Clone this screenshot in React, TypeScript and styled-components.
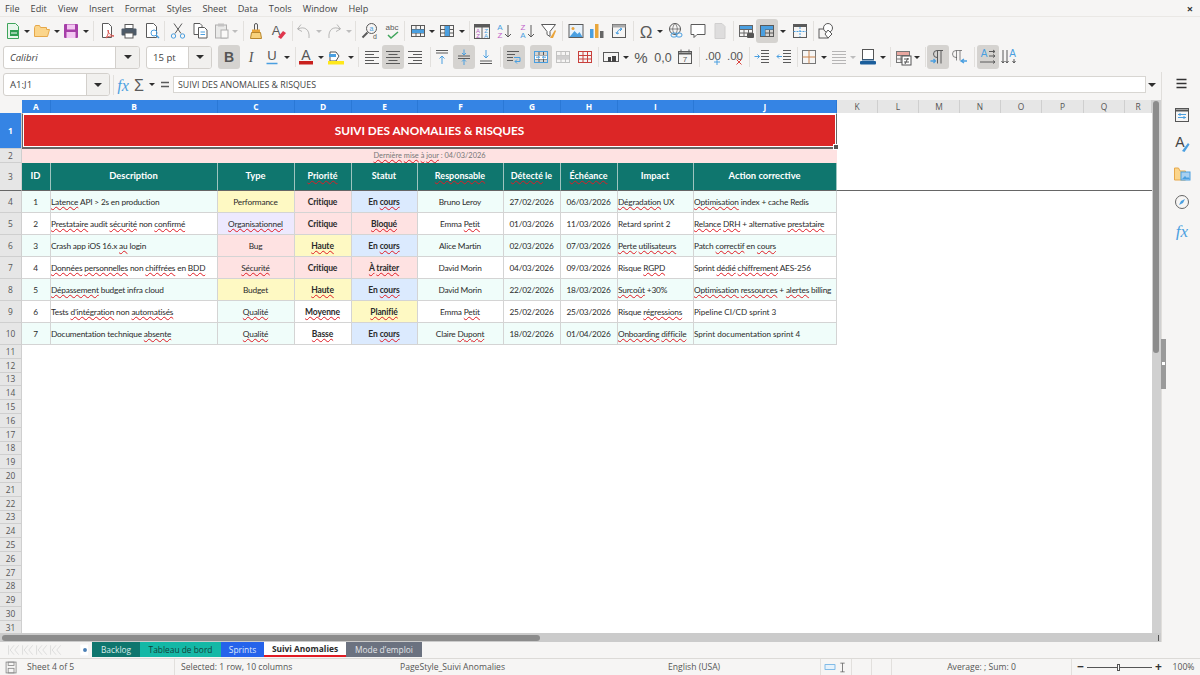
import React from 'react';
import styled, { createGlobalStyle } from 'styled-components';

const GlobalStyle = createGlobalStyle`
  html, body { margin: 0; padding: 0; height: 100%; overflow: hidden; background: #f6f5f4; }
  * { box-sizing: border-box; }
`;

const UI_FONT = `"Open Sans", "Noto Sans", sans-serif`;
const CELL_FONT = `Lato, "Liberation Sans", sans-serif`;
const BLUE = '#4a9fe0';
const DARK = '#5a5a5a';

const Page = styled.div`
  width: 1200px;
  height: 675px;
  display: flex;
  flex-direction: column;
  background: #f6f5f4;
  font-family: ${UI_FONT};
  color: #3d3d3d;
  overflow: hidden;
`;

const MenuBar = styled.div`
  height: 17px;
  flex: none;
  display: flex;
  align-items: center;
  padding-left: 5px;
  gap: 11px;
  font-size: 9.2px;
  color: #444;
  position: relative;
  border-bottom: 1px solid #eae8e5;
`;

const CloseX = styled.span`
  position: absolute;
  right: 7px;
  top: 1px;
  font-size: 11px;
  font-weight: 700;
  color: #333;
`;

const ToolRow = styled.div<{ $h: number; $pad?: number }>`
  height: ${(p) => p.$h}px;
  padding-bottom: ${(p) => p.$pad ?? 0}px;
  display: flex;
  align-items: center;
  flex: none;
`;

const Slot = styled.div<{ $w: number; $gap: number; $active?: boolean }>`
  flex: none;
  width: ${(p) => p.$w}px;
  height: 24px;
  margin-left: ${(p) => p.$gap}px;
  display: flex;
  align-items: center;
  justify-content: center;
  border-radius: 3px;
  background: ${(p) => (p.$active ? '#d5d3d0' : 'transparent')};
`;

const Sep = styled.div<{ $gap: number }>`
  flex: none;
  width: 1px;
  height: 20px;
  margin-left: ${(p) => p.$gap}px;
  background: #e2e0dd;
`;

const Caret = styled.span<{ $light?: boolean; $big?: boolean }>`
  width: 0;
  height: 0;
  border-left: ${(p) => (p.$big ? 4 : 3)}px solid transparent;
  border-right: ${(p) => (p.$big ? 4 : 3)}px solid transparent;
  border-top: ${(p) => (p.$big ? 4 : 3)}px solid ${(p) => (p.$light ? '#bdbdbd' : '#2e2e2e')};
`;

const Combo = styled.div<{ $w: number; $gap: number; $btn: number }>`
  flex: none;
  width: ${(p) => p.$w}px;
  height: 23px;
  margin-left: ${(p) => p.$gap}px;
  display: grid;
  grid-template-columns: 1fr ${(p) => p.$btn}px;
  border: 1px solid #d3d0cc;
  border-radius: 3px;
  background: #fff;
  overflow: hidden;
`;

const ComboText = styled.div<{ $italic?: boolean }>`
  display: flex;
  align-items: center;
  padding-left: 6px;
  font-size: 9.6px;
  font-style: ${(p) => (p.$italic ? 'italic' : 'normal')};
  color: #444;
`;

const ComboBtn = styled.div`
  display: flex;
  align-items: center;
  justify-content: center;
  background: #f1f0ee;
  border-left: 1px solid #d3d0cc;
`;

const FormulaRow = styled.div`
  height: 28px;
  padding-bottom: 3px;
  display: flex;
  align-items: center;
  flex: none;
`;

const FormulaInput = styled.div`
  flex: none;
  width: 973px;
  height: 17px;
  margin-left: -3px;
  border: 1px solid #d8d6d2;
  background: #fff;
  padding-left: 4px;
  display: flex;
  align-items: center;
  font-size: 8.8px;
  color: #444;
`;

const Main = styled.div`
  flex: 1;
  min-height: 0;
  display: flex;
`;

const SheetArea = styled.div`
  width: 1161px;
  flex: none;
  display: flex;
  flex-direction: column;
`;

const SheetBody = styled.div`
  flex: 1;
  min-height: 0;
  display: flex;
`;

const Sheet = styled.div`
  width: 1152px;
  flex: none;
  overflow: hidden;
  background: #fff;
`;

const Grid = styled.div`
  display: grid;
  grid-template-columns: 22px 29px 167px 77px 57px 66px 86px 57px 57px 76px 143px 41px 41px 41px 41px 41px 42px 41px 27px;
  font-family: ${CELL_FONT};
`;

const Corner = styled.div`
  background: #f6f5f4;
  height: 13px;
`;

const ColHead = styled.div<{ $sel?: boolean }>`
  height: 13px;
  display: flex;
  align-items: center;
  justify-content: center;
  font-family: ${UI_FONT};
  font-size: 8.4px;
  font-weight: ${(p) => (p.$sel ? 700 : 400)};
  color: ${(p) => (p.$sel ? '#fff' : '#555')};
  background: ${(p) => (p.$sel ? '#3584e4' : '#e6e6e6')};
  border-right: 1px solid ${(p) => (p.$sel ? '#2a78d6' : '#cfcfcf')};
`;

const RowHead = styled.div<{ $h: number; $sel?: boolean; $bar?: boolean }>`
  height: ${(p) => p.$h}px;
  display: flex;
  align-items: center;
  justify-content: center;
  font-family: ${UI_FONT};
  font-size: 8.4px;
  font-weight: ${(p) => (p.$sel ? 700 : 400)};
  color: ${(p) => (p.$sel ? '#fff' : '#555')};
  background: ${(p) => (p.$sel ? '#3584e4' : '#e6e6e6')};
  border-bottom: 1px solid ${(p) => (p.$bar ? '#666' : '#cfcfcf')};
  border-right: 1px solid #cfcfcf;
`;

const TitleCell = styled.div`
  grid-column: 2 / span 10;
  height: 36px;
  display: flex;
  align-items: center;
  justify-content: center;
  background: #dc2626;
  color: #fff;
  font-size: 11.8px;
  letter-spacing: -0.03px;
  font-weight: 700;
  position: relative;
  box-shadow: inset 0 0 0 1px #fff;
  border-top: 1px solid #fff;
  border-bottom: 2px solid #666;
  border-right: 1px solid #666;
  border-left: 1px solid #666;
`;

const Handle = styled.span`
  position: absolute;
  right: -3px;
  bottom: -3px;
  width: 4px;
  height: 4px;
  background: #555;
  border: 1px solid #fff;
  box-sizing: content-box;
`;

const DateCell = styled.div`
  grid-column: 2 / span 10;
  height: 14px;
  padding-bottom: 1px;
  display: flex;
  align-items: center;
  justify-content: center;
  background: #fee2e2;
  color: #777;
  font-size: 7.4px;
`;

const Blank = styled.div<{ $h: number; $span: number; $bar?: boolean }>`
  grid-column: span ${(p) => p.$span};
  height: ${(p) => p.$h}px;
  background: #fff;
  border-bottom: ${(p) => (p.$bar ? '1px solid #666' : 'none')};
`;

const HeadCell = styled.div<{ $small?: boolean }>`
  height: 28px;
  padding: 0 1px 2px 0;
  display: flex;
  align-items: center;
  justify-content: center;
  background: #0f766e;
  color: #fff;
  font-size: ${(p) => (p.$small ? '9px' : '9.4px')};
  font-weight: 700;
  white-space: nowrap;
  border-right: 1px solid #9dc4bf;
  border-bottom: 1px solid #666;
`;

const Cell = styled.div<{ $bg: string; $left?: boolean; $bold?: boolean; $small?: boolean }>`
  height: 22px;
  display: flex;
  align-items: center;
  justify-content: ${(p) => (p.$left ? 'flex-start' : 'center')};
  padding-right: ${(p) => (p.$left ? '0' : '1px')};
  background: ${(p) => p.$bg};
  color: #2b2b2b;
  font-size: ${(p) => (p.$bold ? '8.5px' : p.$small ? '8.1px' : '8.3px')};
  letter-spacing: ${(p) => (p.$bold ? '-0.12px' : p.$small ? '0' : '-0.18px')};
  font-weight: ${(p) => (p.$bold ? 700 : 400)};
  white-space: nowrap;
  overflow: hidden;
  border-right: 1px solid #d4d4d4;
  border-bottom: 1px solid #d4d4d4;
`;

const Spell = styled.span`
  text-decoration: underline wavy #e01b24;
  text-decoration-thickness: 0.6px;
  text-underline-offset: 0.5px;
  text-decoration-skip-ink: none;
`;

const VScroll = styled.div`
  width: 9px;
  flex: none;
  background: #d0d0d0;
  padding: 1px 0 0 1px;
`;

const VThumb = styled.div`
  width: 6px;
  height: 252px;
  border-radius: 3px;
  background: #8c8c8c;
`;

const HScroll = styled.div`
  height: 9px;
  flex: none;
  background: #cbcbcb;
  padding: 2px 0 0 2px;
  position: relative;
`;

const HThumb = styled.div`
  width: 538px;
  height: 6px;
  border-radius: 3px;
  background: #8c8c8c;
`;

const HGrip = styled.span`
  position: absolute;
  right: 2px;
  top: 2px;
  width: 1px;
  height: 6px;
  background: #555;
`;

const Sidebar = styled.div`
  flex: 1;
  border-left: 1px solid #e0dedb;
  display: flex;
  flex-direction: column;
  align-items: center;
  padding-top: 3px;
  position: relative;
`;

const SideBtn = styled.div<{ $gap: number }>`
  margin-top: ${(p) => p.$gap}px;
  height: 18px;
  display: flex;
  align-items: center;
  justify-content: center;
  padding-left: 2px;
`;

const SideGrip = styled.span`
  position: absolute;
  left: -1px;
  top: 267px;
  width: 5px;
  height: 50px;
  background: #9a9a9a;
  &::after {
    content: '';
    position: absolute;
    left: 1px;
    top: 23px;
    width: 3px;
    height: 3px;
    background: #fff;
  }
`;

const TabBar = styled.div`
  height: 16px;
  flex: none;
  display: flex;
  align-items: stretch;
  padding-bottom: 1px;
`;

const TabNav = styled.div`
  width: 77px;
  display: flex;
  align-items: center;
  padding-left: 7px;
`;

const AddTab = styled.div`
  width: 15px;
  display: flex;
  align-items: center;
  justify-content: center;
`;

const Tab = styled.div<{ $bg: string; $fg: string; $w: number; $active?: boolean }>`
  width: ${(p) => p.$w}px;
  display: flex;
  align-items: center;
  justify-content: center;
  background: ${(p) => p.$bg};
  color: ${(p) => p.$fg};
  font-size: 8.4px;
  font-weight: ${(p) => (p.$active ? 700 : 400)};
  border-bottom: ${(p) => (p.$active ? '2px solid #e01b24' : 'none')};
`;

const StatusBar = styled.div`
  height: 17px;
  flex: none;
  display: flex;
  align-items: center;
  border-top: 1px solid #dcdad7;
  font-size: 8.6px;
  color: #555;
`;

const Field = styled.div<{ $w: number; $center?: boolean; $pad?: number; $line?: boolean }>`
  flex: none;
  width: ${(p) => p.$w}px;
  height: 100%;
  display: flex;
  align-items: center;
  justify-content: ${(p) => (p.$center ? 'center' : 'flex-start')};
  padding-left: ${(p) => p.$pad ?? 0}px;
  border-right: ${(p) => (p.$line ? '1px solid #e2e0dd' : 'none')};
`;

const ZoomTrack = styled.div`
  width: 65px;
  height: 1px;
  margin: 0 3px;
  background: #555;
  position: relative;
`;

const ZoomThumb = styled.span`
  position: absolute;
  left: 30px;
  top: -3px;
  width: 3px;
  height: 7px;
  background: #fff;
  border: 1px solid #555;
`;

const ZoomSign = styled.span`
  font-size: 12px;
  font-weight: 700;
  color: #333;
  line-height: 1;
`;

const Svg = ({ children, size = 18 }: { children: React.ReactNode; size?: number }) => (
  <svg width={size} height={size} viewBox="0 0 18 18" fill="none" strokeWidth={1}>
    {children}
  </svg>
);

const Lines = ({ rows, color = DARK }: { rows: [number, number, number][]; color?: string }) => (
  <>
    {rows.map(([x1, x2, y], i) => (
      <line key={i} x1={x1} x2={x2} y1={y} y2={y} stroke={color} />
    ))}
  </>
);

const TableGrid = ({ stroke = DARK }: { stroke?: string }) => (
  <>
    <rect x="2.5" y="3.5" width="13" height="11" stroke={stroke} />
    <path d="M2.5 7.5h13M2.5 11h13M7 3.5v11M11.5 3.5v11" stroke={stroke} />
  </>
);

const Label = ({ x, y, c, s = 8, t, w }: { x: number; y: number; c: string; s?: number; t: string; w?: number }) => (
  <text x={x} y={y} fill={c} fontSize={s} fontWeight={w} fontFamily="Liberation Sans, sans-serif" textAnchor="middle">
    {t}
  </text>
);

const ICONS: Record<string, React.ReactNode> = {
  new: <><path d="M3.5 1.5h8l3 3v12h-11z" stroke="#3fa55b" fill="#e9f6ec" /><rect x="6" y="8" width="8" height="6" fill="#2f9e52" /><path d="M7 11h6" stroke="#fff" /></>,
  open: <><path d="M1.5 5.5v9h13l2-7h-3v-2h-6l-1-2h-4z" stroke="#e6a84a" fill="#fbd58b" /></>,
  save: <><rect x="2" y="2" width="14" height="14" rx="1" fill="#a63fa8" /><rect x="5" y="2.5" width="8" height="5" fill="#f3c7f2" /><rect x="4.5" y="10" width="9" height="6" fill="#f3c7f2" /></>,
  pdf: <><path d="M4.5 1.5h6l3 3v11h-9z" stroke={DARK} fill="#fff" /><path d="M8 16c2-3 3-6 2-8 0 3 2 5 6 6-3 0-6 0-8 2z" stroke="#d9534f" /></>,
  print: <><rect x="5" y="2.5" width="8" height="4" stroke={DARK} fill="#fff" /><rect x="1.5" y="6.5" width="15" height="7" rx="1" fill="#4d5a68" /><rect x="5" y="11" width="8" height="5" fill="#fff" stroke={DARK} /></>,
  preview: <><path d="M3.5 1.5h7l3 3v11h-10z" stroke={DARK} fill="#fff" /><circle cx="11" cy="11" r="3" stroke={BLUE} /><path d="M13 13l3 3" stroke={BLUE} strokeWidth="1.5" /></>,
  cut: <><path d="M5 1.5l7 10M13 1.5l-7 10" stroke={DARK} /><circle cx="4.5" cy="14" r="2.2" stroke={BLUE} /><circle cx="13.5" cy="14" r="2.2" stroke={BLUE} /></>,
  copy: <><path d="M3 1.5h6l2 2v9H3z" stroke={DARK} fill="#fff" /><path d="M7.5 5.5h6l2.5 2.5v8h-8.5z" stroke={DARK} fill="#fff" /><path d="M9.5 10h4.5M9.5 12.5h4.5" stroke={BLUE} /></>,
  paste: <g opacity="0.45"><rect x="2.5" y="3" width="11" height="13" stroke={DARK} fill="#ddd" /><rect x="5" y="1.5" width="6" height="3" fill="#888" /><rect x="8" y="8" width="7" height="8" stroke={DARK} fill="#fff" /></g>,
  clone: <><path d="M7.5 8V3a1.5 1.5 0 0 1 3 0v5" stroke={DARK} /><rect x="5" y="7.5" width="8" height="3" fill="#e9a63a" /><path d="M4.5 10.5h9l1 6h-11z" stroke="#b8862c" fill="#f8d27c" /></>,
  clear: <><Label x={7} y={13} c={DARK} s={13} t="A" /><path d="M9 15l5-6 3 2-5 6z" fill="#e0364c" /></>,
  undo: <g opacity="0.4"><path d="M6 2.5L2.5 7 7 9.5M3 7c6-3 12 0 11 9" stroke={DARK} /></g>,
  redo: <g opacity="0.4"><path d="M12 2.5L15.5 7 11 9.5M15 7C9 4 3 7 4 16" stroke={DARK} /></g>,
  find: <><circle cx="10.5" cy="6.5" r="5" stroke={DARK} /><path d="M6.5 10.5l-5 5" stroke={DARK} strokeWidth="2" /><Label x={10.5} y={9} c={BLUE} s={7} t="a" /><Label x={14} y={17} c={DARK} s={7} t="d" /></>,
  spell: <><Label x={9} y={8} c={DARK} s={8} t="abc" /><path d="M5 13l3 3 7-6" stroke="#3fa55b" strokeWidth="1.5" /></>,
  rows: <><TableGrid /><rect x="3" y="7.5" width="12" height="3.5" fill={BLUE} /></>,
  cols: <><TableGrid /><rect x="7" y="4" width="4.5" height="10" fill={BLUE} /></>,
  sort: <><rect x="1.5" y="2.5" width="15" height="14" stroke={DARK} /><rect x="1.5" y="2.5" width="15" height="3" fill={DARK} /><path d="M9 5v11" stroke={DARK} /><Label x={5} y={11} c="#b560c4" s={6} t="A" /><Label x={5} y={16} c="#b560c4" s={6} t="Z" /><Label x={13} y={11} c={BLUE} s={6} t="Z" /><Label x={13} y={16} c={BLUE} s={6} t="A" /></>,
  asc: <><Label x={5} y={8} c={BLUE} s={8} t="A" /><Label x={5} y={16} c="#c05fc9" s={8} t="Z" /><path d="M13 3v12M10 12l3 3 3-3" stroke={DARK} /></>,
  desc: <><Label x={5} y={8} c="#c05fc9" s={8} t="Z" /><Label x={5} y={16} c={BLUE} s={8} t="A" /><path d="M13 3v12M10 12l3 3 3-3" stroke={DARK} /></>,
  filter: <><path d="M1.5 2.5h14l-5.5 7v5l-3-2v-3z" stroke={DARK} fill="#fff" /><path d="M10 16l5-8 1 1-3 7z" fill="#eaa43a" /></>,
  image: <><rect x="2" y="2.5" width="14" height="13" stroke={DARK} fill="#e8f2fb" /><circle cx="6" cy="6.5" r="1.5" fill="#e8a33d" /><path d="M2.5 15l5-6 3 3 2-2 3 5z" fill={BLUE} /></>,
  chart: <><rect x="2" y="7" width="3.5" height="9" fill={BLUE} /><rect x="7" y="2" width="3.5" height="14" fill="#e9a63a" /><rect x="12" y="9" width="3.5" height="7" fill="#666" /></>,
  pivot: <><rect x="2.5" y="2.5" width="13" height="13" stroke={DARK} /><rect x="2.5" y="2.5" width="13" height="3" fill="#aaa" /><path d="M7 12c0-3 2-5 5-5M10 6l2 1-2 2M6 10l1 2 2-1" stroke={BLUE} /></>,
  omega: <text x="9" y="15.5" fontSize="17" textAnchor="middle" fill={DARK} fontFamily="Liberation Sans, sans-serif">Ω</text>,
  link: <><circle cx="8" cy="7" r="5.5" stroke={DARK} /><path d="M2.5 7h11M8 1.5c-3 3-3 8 0 11M8 1.5c3 3 3 8 0 11" stroke={DARK} strokeWidth="0.7" /><rect x="4" y="11" width="6" height="4" rx="2" stroke={BLUE} /><rect x="9" y="11" width="6" height="4" rx="2" stroke={BLUE} /></>,
  comment: <><path d="M2 2.5h14v10H8l-3 3v-3H2z" stroke={DARK} fill="#fff" /></>,
  headfoot: <g opacity="0.4"><path d="M4 1.5h7l3 3v12H4z" fill="#bbb" stroke="#999" /></g>,
  printarea: <><TableGrid stroke="#666" /><rect x="3" y="4" width="12" height="3" fill={BLUE} /><rect x="10" y="11" width="7" height="5" rx="1" fill="#555" /></>,
  freeze: <><TableGrid /><rect x="3" y="4" width="12" height="3.5" fill={BLUE} /><rect x="3" y="4" width="4" height="10" fill={BLUE} /></>,
  split: <><rect x="2.5" y="2.5" width="13" height="13" stroke={DARK} /><rect x="2.5" y="2.5" width="13" height="2.5" fill={DARK} /><path d="M2.5 9.5h13M9 5v10" stroke={BLUE} strokeDasharray="2 1" /></>,
  shapes: <><rect x="2" y="7" width="9" height="9" stroke={DARK} /><circle cx="11" cy="6" r="4.5" stroke={DARK} fill="#fff" /><path d="M11 8l4 4-4 4-3-4z" stroke={DARK} fill="#fff" /></>,
  bold: <text x="9" y="14" fontSize="14" fontWeight="700" textAnchor="middle" fill="#555" fontFamily="Liberation Sans, sans-serif">B</text>,
  italic: <text x="9" y="14" fontSize="14" fontStyle="italic" textAnchor="middle" fill="#555" fontFamily="Liberation Serif, serif">I</text>,
  underline: <><Label x={9} y={12} c="#555" s={13} t="U" /><path d="M3.5 15.5h11" stroke={BLUE} strokeWidth="1.5" /></>,
  fontcolor: <><Label x={9} y={12} c="#555" s={14} t="A" /><rect x="2" y="13" width="14" height="3.5" fill="#c9211e" /></>,
  bgcolor: <><path d="M3 4h6l3 4-3 5H3z" fill="#fff" stroke="#555" /><path d="M2 6h7v3H2z" fill={BLUE} /><rect x="1" y="13" width="16" height="3.5" fill="#ffe81a" /></>,
  left: <Lines rows={[[2, 16, 3.5], [2, 11, 6.5], [2, 16, 9.5], [2, 11, 12.5], [2, 16, 15.5]]} />,
  center: <Lines rows={[[2, 16, 3.5], [4.5, 13.5, 6.5], [2, 16, 9.5], [4.5, 13.5, 12.5], [2, 16, 15.5]]} />,
  right: <Lines rows={[[2, 16, 3.5], [7, 16, 6.5], [2, 16, 9.5], [7, 16, 12.5], [2, 16, 15.5]]} />,
  top: <><Lines rows={[[3, 15, 2.5], [3, 15, 5]]} /><path d="M9 16V8M6.5 10.5L9 8l2.5 2.5" stroke={BLUE} /></>,
  middle: <><Lines rows={[[3, 15, 8], [3, 15, 10.5]]} /><path d="M9 1.5V7M7 5l2 2 2-2M9 17v-5.5M7 13.5l2-2 2 2" stroke={BLUE} /></>,
  bottom: <><Lines rows={[[3, 15, 13], [3, 15, 15.5]]} /><path d="M9 2v8M6.5 7.5L9 10l2.5-2.5" stroke={BLUE} /></>,
  wrap: <><Lines rows={[[2, 14, 3.5], [2, 10, 6.5], [2, 8, 9.5], [2, 8, 12.5]]} /><path d="M9 9.5h6v4H10M12 11.5l-2 2 2 2" stroke={BLUE} /></>,
  merge: <><TableGrid /><rect x="3" y="7.5" width="12" height="3.5" fill="#fff" /><path d="M4 9.2h3.5M14 9.2h-3.5M6 7.8l1.5 1.4L6 10.6M12 7.8l-1.5 1.4 1.5 1.4" stroke={BLUE} /><rect x="2.5" y="3.5" width="13" height="11" stroke={BLUE} /></>,
  unmerge: <g opacity="0.4"><TableGrid stroke="#777" /><rect x="3" y="7.5" width="12" height="3.5" fill="#999" /></g>,
  splitcell: <TableGrid stroke="#c9403c" />,
  format: <><rect x="1.5" y="4.5" width="15" height="9" stroke={DARK} /><rect x="6" y="9" width="3" height="5" fill="#444" /><rect x="10" y="8" width="4" height="6" fill="#444" /></>,
  percent: <text x="9" y="14.5" fontSize="15" textAnchor="middle" fill="#555" fontFamily="Liberation Sans, sans-serif">%</text>,
  number: <text x="9" y="14" fontSize="12.5" textAnchor="middle" fill="#555" fontFamily="Liberation Sans, sans-serif">0,0</text>,
  date: <><rect x="2.5" y="3.5" width="13" height="12" stroke={DARK} /><path d="M2.5 5.5h13" stroke={DARK} strokeWidth="2" /><path d="M5 1.5v3M13 1.5v3" stroke={DARK} /><Label x={9} y={14} c="#555" s={8} t="7" /></>,
  adddec: <><text x="9" y="12" fontSize="11.5" textAnchor="middle" fill="#555" fontFamily="Liberation Sans, sans-serif">.00</text><path d="M13 11v6M10 14h6" stroke={BLUE} /></>,
  deldec: <><text x="9" y="12" fontSize="11.5" textAnchor="middle" fill="#555" fontFamily="Liberation Sans, sans-serif">.00</text><path d="M10.5 11.5l5 5M15.5 11.5l-5 5" stroke="#d9433f" /></>,
  indent: <><Lines rows={[[8, 16, 2.5], [8, 16, 5.5], [8, 16, 8.5], [8, 16, 11.5], [8, 16, 14.5]]} /><path d="M1.5 8.5h5M4.5 6.5l2 2-2 2" stroke={BLUE} /></>,
  outdent: <><Lines rows={[[8, 16, 2.5], [8, 16, 5.5], [8, 16, 8.5], [8, 16, 11.5], [8, 16, 14.5]]} /><path d="M7 8.5H2M4 6.5l-2 2 2 2" stroke={BLUE} /></>,
  border: <><rect x="2.5" y="2.5" width="13" height="13" stroke="#777" /><path d="M9 2.5v13M2.5 9h13" stroke="#c9824a" /></>,
  borderstyle: <g opacity="0.5"><Lines rows={[[2, 16, 3.5], [2, 16, 6.5], [2, 16, 9.5], [2, 16, 12.5], [2, 16, 15.5]]} color="#777" /></g>,
  bordercolor: <><rect x="3.5" y="1.5" width="11" height="10" stroke="#555" fill="#fff" /><rect x="1" y="13" width="16" height="3.5" rx="1" fill="#1b5e9b" /><path d="M3 12h12" stroke="#1b5e9b" /></>,
  cond: <><TableGrid stroke="#777" /><rect x="3" y="4" width="12" height="3" fill="#e8a7a0" /><rect x="8" y="8" width="9" height="9" fill="#fff" stroke="#555" /><path d="M10 11h5M10 14h5M14 10l-3 6" stroke="#555" /></>,
  ltr: <><path d="M8.5 2.5v13M12 2.5v13M14 2.5H8a3.5 3.5 0 0 0 0 7h1" stroke={DARK} /><path d="M1.5 13h5M4.5 11l2 2-2 2" stroke={BLUE} strokeWidth="1.3" /></>,
  rtl: <><path d="M5.5 2.5v10M9 2.5v10M11 2.5H5a3.5 3.5 0 0 0 0 7h1" stroke={DARK} opacity="0.7" /><path d="M16 13h-6M13 11l-3 2 3 2" stroke={BLUE} strokeWidth="1.3" /></>,
  vltr: <><Label x={5} y={9} c={BLUE} s={10} t="A" /><path d="M10 3.5h6M14 2l2 1.5L14 5M10 8h6M14 6.5L16 8l-2 1.5M1 14h15M14 12.5l2 1.5-2 1.5" stroke={DARK} /></>,
  vrtl: <><Label x={12.5} y={9} c={BLUE} s={10} t="A" /><path d="M3 2v13M1.5 13L3 15l1.5-2M7 2v13M5.5 13L7 15l1.5-2M14 11v4M12.5 13l1.5 2 1.5-2" stroke={DARK} /></>,
  fx: <text x="8" y="14.5" fontSize="16" fontStyle="italic" textAnchor="middle" fill={BLUE} fontFamily="Liberation Serif, serif">fx</text>,
  sigma: <text x="9" y="14.5" fontSize="16" textAnchor="middle" fill={DARK} fontFamily="Liberation Sans, sans-serif">Σ</text>,
  equals: <path d="M5 6.5h8M5 10.5h8" stroke={DARK} strokeWidth="1.6" />,
  menu: <path d="M3.5 4.5h10M3.5 8.5h10M3.5 12.5h10" stroke="#333" strokeWidth="1.4" />,
  props: <><rect x="2.5" y="2.5" width="13" height="13" stroke="#555" /><path d="M2.5 4.5h13" stroke="#555" strokeWidth="2" /><path d="M5 8.5h8M5 11.5h8M7 7v3M11 10v3" stroke={BLUE} /></>,
  styles: <><Label x={7} y={12} c="#444" s={14} t="A" /><path d="M9 16l6-8 1.5 1.5-5 7.5z" fill={BLUE} /></>,
  gallery: <><path d="M1.5 4v12h11V7H7L5.5 4z" stroke="#e6a84a" fill="#fbd58b" /><rect x="8" y="8" width="9" height="8" fill="#a8d0f0" stroke={BLUE} /><path d="M9 15l3-3 2 2 1-1 2 2z" fill={BLUE} /></>,
  nav: <><circle cx="9" cy="9" r="6.5" stroke="#666" /><path d="M12 6l-2 4-4 2 2-4z" fill={BLUE} /></>,
  sidefx: <text x="9" y="15" fontSize="17" fontStyle="italic" textAnchor="middle" fill={BLUE} fontFamily="Liberation Serif, serif">fx</text>,
  savedoc: <><rect x="2.5" y="2.5" width="12" height="13" stroke="#888" /><rect x="5" y="2.5" width="7" height="4" stroke="#888" /><rect x="5" y="10" width="7" height="5.5" stroke="#888" /></>,
  addtab: <><path d="M3 2h10v14H3z" fill="#fff" /><circle cx="9" cy="9" r="2.5" fill="#4a7fb5" /></>,
  nav4: <g stroke="#d6d6d6"><path d="M2 3v12M9 3L4 9l5 6M15 3l-5 6 5 6" /></g>,
  rect: <rect x="1.5" y="5.5" width="15" height="7" stroke={BLUE} fill="#e6f2fb" />,
  ibeam: <path d="M6 3h6M6 15h6M9 3v12" stroke="#555" />
};

// [kind, centre x, active]; caret rows use 'v', separators use '|'
type Tool = [string, number, boolean?];

const ROW1: Tool[] = [
  ['new', 13], ['v', 27], ['open', 42], ['v', 57], ['save', 71], ['v', 86], ['|', 93],
  ['pdf', 107], ['print', 129], ['preview', 152], ['|', 164], ['cut', 178], ['copy', 200],
  ['paste', 222], ['vl', 235], ['|', 243], ['clone', 256], ['clear', 278], ['|', 292],
  ['undo', 304], ['vl', 319], ['redo', 334], ['vl', 349], ['|', 355], ['find', 370], ['spell', 392],
  ['|', 404], ['rows', 418], ['v', 432], ['cols', 447], ['v', 462], ['|', 469], ['sort', 482],
  ['asc', 504], ['desc', 527], ['filter', 549], ['|', 562], ['image', 576], ['chart', 597],
  ['pivot', 619], ['|', 633], ['omega', 646], ['v', 660], ['link', 676], ['comment', 698],
  ['headfoot', 720], ['|', 733], ['printarea', 746], ['freeze', 767, true], ['v', 783], ['split', 800],
  ['|', 813], ['shapes', 826]
];

const ROW2: Tool[] = [
  ['bold', 229, true], ['italic', 251], ['underline', 272], ['v', 287], ['|', 295],
  ['fontcolor', 306], ['v', 321], ['bgcolor', 336], ['v', 351], ['|', 358],
  ['left', 372], ['center', 393, true], ['right', 415], ['|', 430],
  ['top', 442], ['middle', 464, true], ['bottom', 486], ['|', 500],
  ['wrap', 514, true], ['merge', 541, true], ['unmerge', 563], ['splitcell', 585], ['|', 598],
  ['format', 611], ['v', 626], ['percent', 641], ['number', 663], ['date', 685], ['|', 699],
  ['adddec', 713], ['deldec', 735], ['|', 749], ['indent', 762], ['outdent', 784], ['|', 797],
  ['border', 809], ['v', 824], ['borderstyle', 839], ['vl', 853], ['bordercolor', 868], ['v', 883], ['|', 890],
  ['cond', 903], ['v', 917], ['|', 925], ['ltr', 938, true], ['rtl', 960], ['|', 974],
  ['vltr', 988, true], ['vrtl', 1009]
];

const toolWidth = (kind: string) => (kind === '|' ? 1 : kind === 'v' || kind === 'vl' ? 8 : 22);

// Turn the centre positions into flex items with a gap before each one
const Tools = ({ items, start }: { items: Tool[]; start: number }) => {
  let end = start;
  return (
    <>
      {items.map(([kind, x, active], i) => {
        const w = toolWidth(kind);
        const gap = x - w / 2 - end;
        end = x + w / 2;
        if (kind === '|') return <Sep key={i} $gap={gap} />;
        return (
          <Slot key={i} $w={w} $gap={gap} $active={active}>
            {kind === 'v' || kind === 'vl' ? <Caret $light={kind === 'vl'} /> : <Svg>{ICONS[kind]}</Svg>}
          </Slot>
        );
      })}
    </>
  );
};

// *word* marks a word with the spell-check squiggle
const Marked = ({ text }: { text: string }) => (
  <span>
    {text.split('*').map((part, i) => (i % 2 ? <Spell key={i}>{part}</Spell> : part))}
  </span>
);

const MINT = '#f0fdfa';
const WHITE = '#ffffff';
const YELLOW = '#fef9c3';
const PINK = '#fee2e2';
const LILAC = '#ede9fe';
const SKY = '#dbeafe';

const COL_LETTERS = 'ABCDEFGHIJKLMNOPQR'.split('');

const HEADERS: [string, boolean][] = [
  ['ID', false], ['Description', false], ['Type', false], ['*Priorité*', true], ['Statut', true],
  ['*Responsable*', true], ['*Détecté* le', true], ['*Échéance*', true], ['Impact', false], ['Action corrective', false]
];

interface Anomaly {
  desc: string;
  type: [string, string];
  prio: [string, string];
  status: [string, string];
  owner: string;
  found: string;
  due: string;
  impact: string;
  impactSmall?: boolean;
  action: string;
  actionSmall?: boolean;
}

const ANOMALIES: Anomaly[] = [
  { desc: '*Latence* API > 2s en production', type: ['Performance', YELLOW], prio: ['Critique', PINK], status: ['En *cours*', SKY], owner: 'Bruno Leroy', found: '27/02/2026', due: '06/03/2026', impact: '*Dégradation* UX', action: '*Optimisation* index + cache Redis' },
  { desc: '*Prestataire* audit *sécurité* non *confirmé*', type: ['*Organisationnel*', LILAC], prio: ['Critique', PINK], status: ['*Bloqué*', PINK], owner: 'Emma *Petit*', found: '01/03/2026', due: '11/03/2026', impact: 'Retard sprint 2', impactSmall: true, action: '*Relance* *DRH* + alternative *prestataire*' },
  { desc: 'Crash app iOS 16.x *au* login', type: ['Bug', PINK], prio: ['*Haute*', YELLOW], status: ['En *cours*', SKY], owner: 'Alice Martin', found: '02/03/2026', due: '07/03/2026', impact: '*Perte* *utilisateurs*', action: 'Patch *correctif* en *cours*' },
  { desc: '*Données* *personnelles* non *chiffrées* en *BDD*', type: ['*Sécurité*', PINK], prio: ['Critique', PINK], status: ['*À* *traiter*', PINK], owner: 'David Morin', found: '04/03/2026', due: '09/03/2026', impact: 'Risque *RGPD*', action: 'Sprint *dédié* *chiffrement* AES-256' },
  { desc: '*Dépassement* budget infra cloud', type: ['Budget', YELLOW], prio: ['*Haute*', YELLOW], status: ['En *cours*', SKY], owner: 'David Morin', found: '22/02/2026', due: '18/03/2026', impact: '*Surcoût* +30%', action: '*Optimisation* *ressources* + *alertes* billing' },
  { desc: 'Tests *d’intégration* non *automatisés*', type: ['*Qualité*', MINT], prio: ['*Moyenne*', WHITE], status: ['*Planifié*', YELLOW], owner: 'Emma *Petit*', found: '25/02/2026', due: '25/03/2026', impact: 'Risque *régressions*', action: 'Pipeline CI/CD sprint 3', actionSmall: true },
  { desc: 'Documentation technique *absente*', type: ['*Qualité*', MINT], prio: ['*Basse*', WHITE], status: ['En *cours*', SKY], owner: 'Claire *Dupont*', found: '18/02/2026', due: '01/04/2026', impact: '*Onboarding* *difficile*', action: 'Sprint documentation sprint 4', actionSmall: true }
];

const EMPTY_ROWS = Array.from({ length: 21 }, (_, i) => i + 11);

const TABS = [
  { name: 'Backlog', bg: '#0f766e', fg: '#d7ece9', w: 48 },
  { name: 'Tableau de bord', bg: '#14b8a6', fg: '#123f3a', w: 81 },
  { name: 'Sprints', bg: '#2563eb', fg: '#dfe8fb', w: 43 },
  { name: 'Suivi Anomalies', bg: '#ffffff', fg: '#2b2b2b', w: 82, active: true },
  { name: 'Mode d’emploi', bg: '#6b7280', fg: '#e3e5e8', w: 76 }
];

export default function App() {
  return (
    <Page>
      <GlobalStyle />
      <MenuBar>
        {['File', 'Edit', 'View', 'Insert', 'Format', 'Styles', 'Sheet', 'Data', 'Tools', 'Window', 'Help'].map((m) => (
          <span key={m}>{m}</span>
        ))}
        <CloseX>×</CloseX>
      </MenuBar>

      <ToolRow $h={28}>
        <Tools items={ROW1} start={0} />
      </ToolRow>

      <ToolRow $h={27} $pad={3}>
        <Combo $w={137} $gap={3} $btn={24}>
          <ComboText $italic>Calibri</ComboText>
          <ComboBtn><Caret $big /></ComboBtn>
        </Combo>
        <Combo $w={66} $gap={6} $btn={23}>
          <ComboText>15 pt</ComboText>
          <ComboBtn><Caret $big /></ComboBtn>
        </Combo>
        <Tools items={ROW2} start={212} />
      </ToolRow>

      <Main>
        <SheetArea>
          <FormulaRow>
            <Combo $w={107} $gap={3} $btn={23}>
              <ComboText>A1:J1</ComboText>
              <ComboBtn><Caret $big /></ComboBtn>
            </Combo>
            <Tools items={[['|', 113], ['fx', 124], ['sigma', 139], ['v', 152], ['equals', 165]]} start={110} />
            <FormulaInput>SUIVI DES ANOMALIES &amp; RISQUES</FormulaInput>
            <Slot $w={12} $gap={0}><Caret $big /></Slot>
          </FormulaRow>
          <SheetBody>
            <Sheet>
              <Grid>
                <Corner />
                {COL_LETTERS.map((c, i) => (
                  <ColHead key={c} $sel={i < 10}>{c}</ColHead>
                ))}

                <RowHead $h={36} $sel>1</RowHead>
                <TitleCell>
                  SUIVI DES ANOMALIES &amp; RISQUES
                  <Handle />
                </TitleCell>
                <Blank $h={36} $span={8} />

                <RowHead $h={14}>2</RowHead>
                <DateCell>
                  <Marked text="*Dernière* *mise* *à* *jour* : 04/03/2026" />
                </DateCell>
                <Blank $h={14} $span={8} />

                <RowHead $h={28} $bar>3</RowHead>
                {HEADERS.map(([label, small]) => (
                  <HeadCell key={label} $small={small}>
                    <Marked text={label} />
                  </HeadCell>
                ))}
                <Blank $h={28} $span={8} $bar />

                {ANOMALIES.map((a, i) => {
                  const bg = i % 2 ? WHITE : MINT;
                  return (
                    <React.Fragment key={i}>
                      <RowHead $h={22}>{i + 4}</RowHead>
                      <Cell $bg={bg}>{i + 1}</Cell>
                      <Cell $bg={bg} $left><Marked text={a.desc} /></Cell>
                      <Cell $bg={a.type[1]}><Marked text={a.type[0]} /></Cell>
                      <Cell $bg={a.prio[1]} $bold><Marked text={a.prio[0]} /></Cell>
                      <Cell $bg={a.status[1]} $bold><Marked text={a.status[0]} /></Cell>
                      <Cell $bg={bg}><Marked text={a.owner} /></Cell>
                      <Cell $bg={bg}>{a.found}</Cell>
                      <Cell $bg={bg}>{a.due}</Cell>
                      <Cell $bg={bg} $left $small={a.impactSmall}><Marked text={a.impact} /></Cell>
                      <Cell $bg={bg} $left $small={a.actionSmall}><Marked text={a.action} /></Cell>
                      <Blank $h={22} $span={8} />
                    </React.Fragment>
                  );
                })}

                {EMPTY_ROWS.map((n) => (
                  <React.Fragment key={n}>
                    <RowHead $h={13.8}>{n}</RowHead>
                    <Blank $h={13.8} $span={18} />
                  </React.Fragment>
                ))}
              </Grid>
            </Sheet>
            <VScroll>
              <VThumb />
            </VScroll>
          </SheetBody>
          <HScroll>
            <HThumb />
            <HGrip />
          </HScroll>
        </SheetArea>
        <Sidebar>
          <SideGrip />
          <SideBtn $gap={0}><Svg>{ICONS.menu}</Svg></SideBtn>
          <SideBtn $gap={13}><Svg>{ICONS.props}</Svg></SideBtn>
          <SideBtn $gap={11}><Svg>{ICONS.styles}</Svg></SideBtn>
          <SideBtn $gap={11}><Svg>{ICONS.gallery}</Svg></SideBtn>
          <SideBtn $gap={11}><Svg>{ICONS.nav}</Svg></SideBtn>
          <SideBtn $gap={11}><Svg>{ICONS.sidefx}</Svg></SideBtn>
        </Sidebar>
      </Main>

      <TabBar>
        <TabNav>
          {[0, 1, 2, 3].map((n) => <Svg key={n} size={14}>{ICONS.nav4}</Svg>)}
        </TabNav>
        <AddTab><Svg size={14}>{ICONS.addtab}</Svg></AddTab>
        {TABS.map((t) => (
          <Tab key={t.name} $bg={t.bg} $fg={t.fg} $w={t.w} $active={t.active}>{t.name}</Tab>
        ))}
      </TabBar>

      <StatusBar>
        <Field $w={27} $pad={4}><Svg size={15}>{ICONS.savedoc}</Svg></Field>
        <Field $w={148} $line>Sheet 4 of 5</Field>
        <Field $w={225} $pad={6}>Selected: 1 row, 10 columns</Field>
        <Field $w={268}>PageStyle_Suivi Anomalies</Field>
        <Field $w={153} $line>English (USA)</Field>
        <Field $w={31} $center $line><Svg size={12}>{ICONS.rect}</Svg><Svg size={13}>{ICONS.ibeam}</Svg></Field>
        <Field $w={20} $line />
        <Field $w={20} $line />
        <Field $w={180} $center $line>Average: ; Sum: 0</Field>
        <Field $w={95} $center>
          <ZoomSign>−</ZoomSign>
          <ZoomTrack><ZoomThumb /></ZoomTrack>
          <ZoomSign>+</ZoomSign>
        </Field>
        <Field $w={33} $center>100%</Field>
      </StatusBar>
    </Page>
  );
}
